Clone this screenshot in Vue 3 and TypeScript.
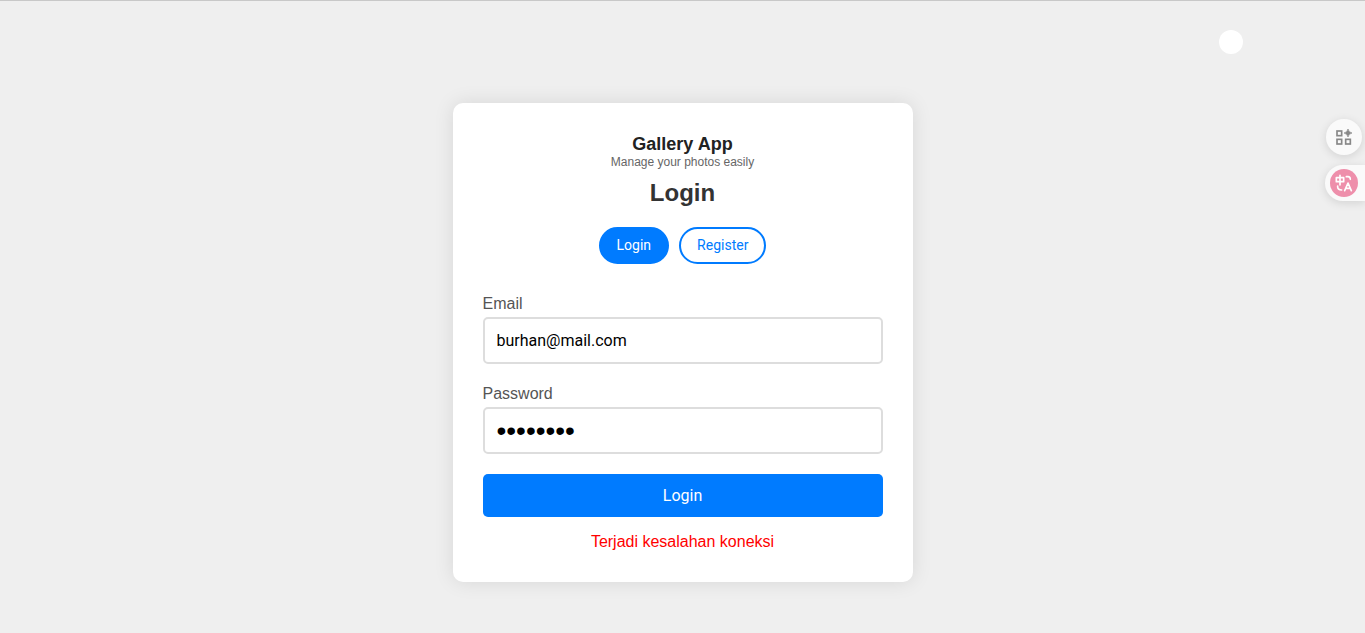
<script setup lang="ts">
import { ref } from 'vue'

type Mode = 'Login' | 'Register'

const modes: Mode[] = ['Login', 'Register']
const mode = ref<Mode>('Login')
const email = ref('burhan@mail.com')
const password = ref('password')
const message = ref('Terjadi kesalahan koneksi')

function submit(): void {
  message.value = 'Terjadi kesalahan koneksi'
}
</script>

<template>
  <div class="page">
    <main class="card">
      <header class="brand">
        <h1 class="brand-name">Gallery App</h1>
        <p class="tagline">Manage your photos easily</p>
      </header>
      <h2 class="heading">{{ mode }}</h2>
      <div class="tabs">
        <button
          v-for="item in modes"
          :key="item"
          type="button"
          class="tab"
          :class="{ active: mode === item }"
          @click="mode = item"
        >{{ item }}</button>
      </div>
      <form @submit.prevent="submit">
        <div class="field">
          <label for="email">Email</label>
          <input id="email" v-model="email" type="email" autocomplete="off" />
        </div>
        <div class="field">
          <label for="password">Password</label>
          <input id="password" v-model="password" class="masked" type="password" autocomplete="off" />
        </div>
        <button type="submit" class="submit">{{ mode }}</button>
      </form>
      <p class="message" role="alert">{{ message }}</p>
    </main>

    <span class="dot"></span>

    <aside class="tools">
      <button type="button" class="tool apps" aria-label="Apps">
        <svg width="16" height="16" viewBox="0 0 48 48" fill="none" stroke="#888" stroke-width="5">
          <rect x="3" y="6" width="14" height="14" />
          <rect x="3" y="31" width="14" height="14" />
          <rect x="29" y="31" width="14" height="14" />
          <path d="M36 0 Q38 10 48 12 Q38 14 36 24 Q34 14 24 12 Q34 10 36 0Z" fill="#888" stroke-width="2" />
        </svg>
      </button>
      <button type="button" class="tool translate" aria-label="Translate">
        <span class="disc">
          <svg width="18" height="18" viewBox="-3 -3 54 54" fill="none" stroke="#fff" stroke-width="5" stroke-linecap="round" stroke-linejoin="round">
            <path d="M1 8H23V20H1ZM12 1V30" />
            <path d="M31 5H36Q43 5 43 13M5 33V36Q5 44 17 45" />
            <path d="M26 47L36 24L46 47M30 40H42" />
          </svg>
        </span>
      </button>
    </aside>
  </div>
</template>

<style>
body {
  margin: 0;
  background: #efefef;
}
</style>

<style scoped>
.page {
  box-sizing: border-box;
  min-height: 100vh;
  display: flex;
  align-items: center;
  justify-content: center;
  padding-top: 51px;
  border-top: 1px solid #c8c8c8;
  font: 16px/18px "Liberation Sans", Arial, sans-serif;
}

.card {
  box-sizing: border-box;
  width: 100%;
  max-width: 460px;
  padding: 30px;
  border-radius: 10px;
  background: #fff;
  box-shadow: 0 0 20px rgba(0, 0, 0, 0.1);
}

h1,
h2,
p {
  margin: 0;
}

.brand,
.heading,
.message {
  text-align: center;
}

.brand-name {
  color: #222;
  font-size: 18px;
  line-height: 22px;
}

.tagline {
  color: #666;
  font-size: 12px;
  line-height: 14px;
}

.heading {
  margin: 10px 0 20px;
  color: #333;
  font-size: 24px;
  line-height: 28px;
}

.tabs {
  display: flex;
  justify-content: center;
  gap: 10px;
  margin-bottom: 30px;
}

.tab {
  padding: 8px 16px;
  border: 2px solid #007bff;
  border-radius: 20px;
  background: #fff;
  color: #007bff;
  font: 14px/17px Roboto, sans-serif;
}

.tab.active {
  background: #007bff;
  color: #fff;
}

.field {
  margin-bottom: 20px;
}

.field label {
  display: block;
  margin-bottom: 3px;
  color: #555;
  line-height: 20px;
}

.field input {
  box-sizing: border-box;
  display: block;
  width: 100%;
  height: 47px;
  padding: 0 12px;
  border: 2px solid #ddd;
  border-radius: 5px;
  background: #fff;
  color: #000;
  font: 16px/19px Roboto, sans-serif;
}

.field .masked {
  font: 28px/32px "Liberation Sans", Arial, sans-serif;
}

.submit {
  display: block;
  width: 100%;
  padding: 12px;
  border: 0;
  border-radius: 5px;
  background: #007bff;
  color: #fff;
  font: 16px/19px Roboto, sans-serif;
}

.message {
  margin-top: 15px;
  color: #f00;
  line-height: 20px;
}

.dot {
  position: fixed;
  top: 30px;
  right: 122px;
  width: 24px;
  height: 24px;
  border-radius: 50%;
  background: #fff;
}

.tools {
  position: fixed;
  top: 119px;
  right: 0;
  display: flex;
  flex-direction: column;
  align-items: flex-end;
  gap: 10px;
}

.tool {
  display: flex;
  align-items: center;
  justify-content: center;
  height: 36px;
  padding: 0;
  border: 0;
  background: #fafafa;
  box-shadow: 0 2px 10px rgba(0, 0, 0, 0.12);
}

.apps {
  width: 36px;
  margin-right: 3px;
  border-radius: 50%;
}

.translate {
  justify-content: flex-start;
  width: 40px;
  padding-left: 5px;
  border-radius: 18px 0 0 18px;
}

.disc {
  display: flex;
  align-items: center;
  justify-content: center;
  width: 28px;
  height: 28px;
  border-radius: 50%;
  background: #ee8fab;
}
</style>
